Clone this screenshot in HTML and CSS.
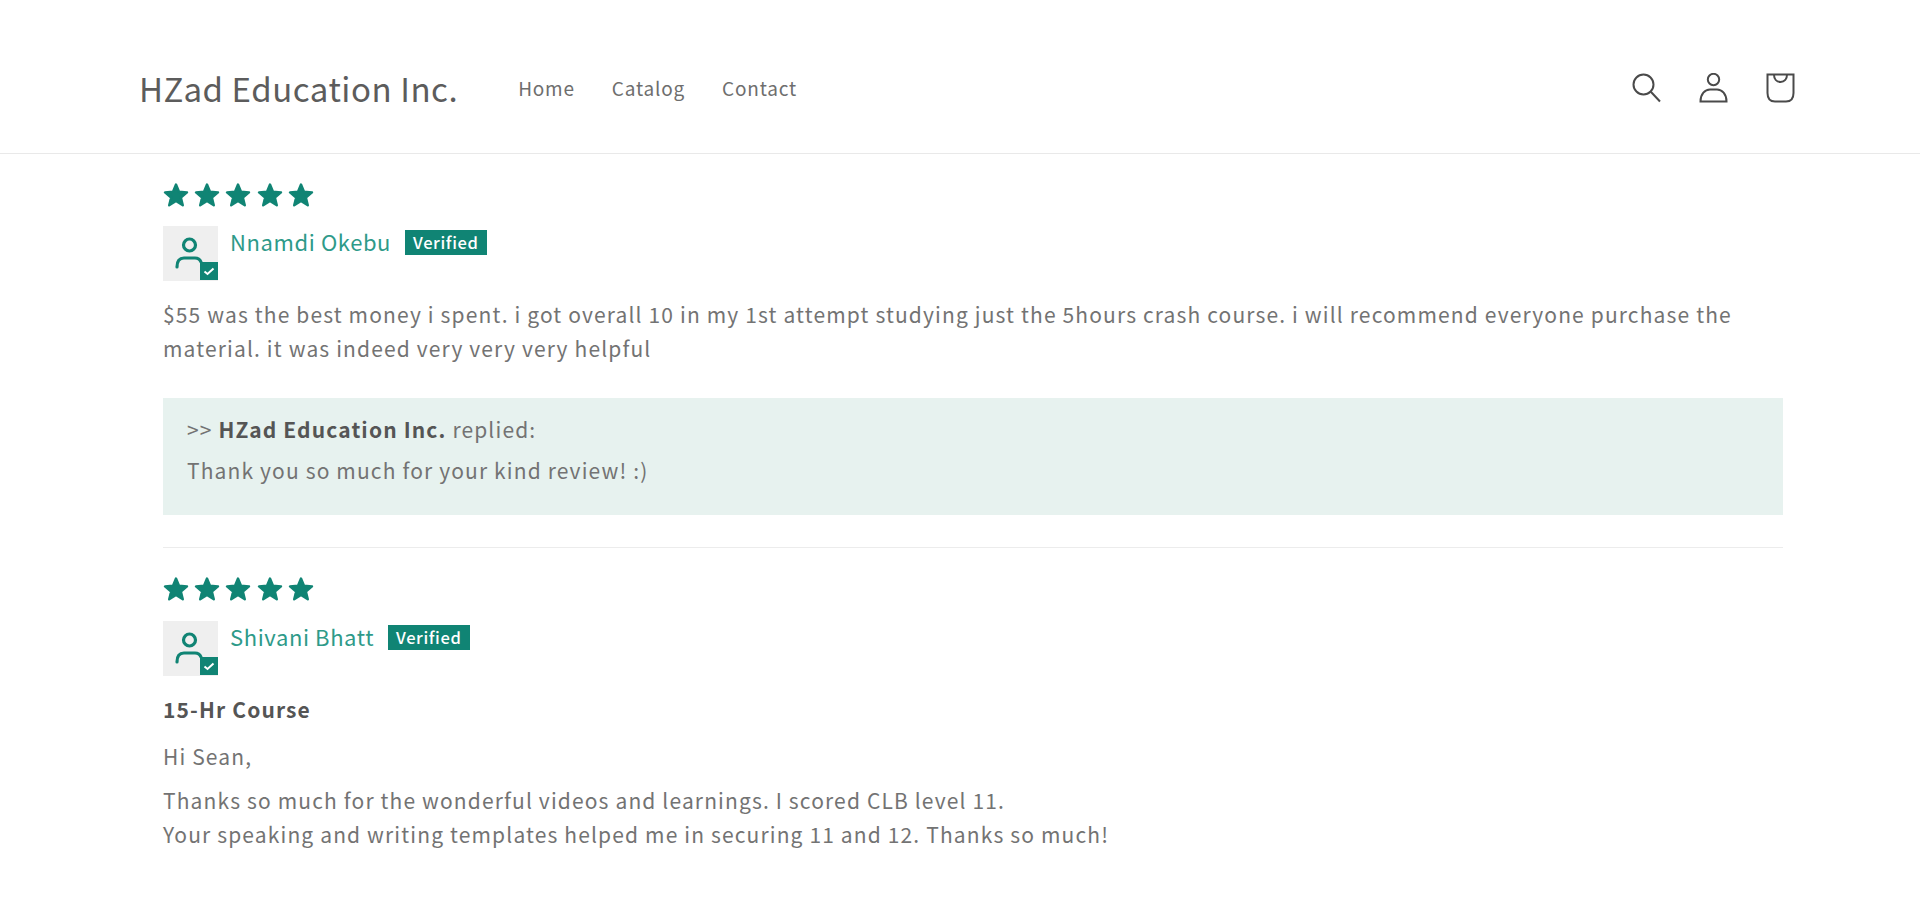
FILE: index.html
```html
<!DOCTYPE html>
<html lang="en">
<head>
    <title>HZad Education Inc.</title>
    <link rel="stylesheet" href="styles.css">
</head>
<body>
    <svg class="defs" width="0" height="0">
        <symbol id="star" viewBox="0 0 26 26"><path d="M13 2.5 L16 9.8 L24 10.4 L17.9 15.5 L19.8 23.3 L13 19.1 L6.2 23.3 L8.1 15.5 L2 10.4 L10 9.8 Z"/></symbol>
        <symbol id="reviewer" viewBox="0 0 55 55"><circle cx="26.5" cy="19" r="6"/><path d="M14 41 C14 35 16 32 21 32 H32 C35 32 37 33.5 38 36"/></symbol>
    </svg>

    <header class="header">
        <a class="logo" href="#">HZad Education Inc.</a>
        <nav class="nav">
            <a href="#">Home</a>
            <a href="#">Catalog</a>
            <a href="#">Contact</a>
        </nav>
        <div class="header-icons">
            <svg class="icon" viewBox="0 0 29 30"><circle cx="11.5" cy="11.5" r="10"/><path d="M18.8 18.8 L28 28.5"/></svg>
            <svg class="icon" viewBox="0 0 29 30"><circle cx="14.5" cy="6.5" r="5.7"/><path d="M1.5 28.5 C1.5 21 6 16.5 11 16.5 H18 C23 16.5 27.5 21 27.5 28.5 Z"/></svg>
            <svg class="icon" viewBox="0 0 29 30"><path d="M1.5 1.5 H27.5 V20 C27.5 25.5 24.5 28.5 20 28.5 H9 C4.5 28.5 1.5 25.5 1.5 20 Z"/><path d="M8 1.5 C8 6 10.5 9 14.5 9 C18.5 9 21 6 21 1.5"/></svg>
        </div>
    </header>

    <main class="reviews">
        <article class="review">
            <div class="stars">
                <svg><use href="#star"/></svg>
                <svg><use href="#star"/></svg>
                <svg><use href="#star"/></svg>
                <svg><use href="#star"/></svg>
                <svg><use href="#star"/></svg>
            </div>
            <div class="reviewer">
                <div class="avatar">
                    <svg class="avatar-person"><use href="#reviewer"/></svg>
                    <span class="avatar-check"><svg viewBox="0 0 18 18"><path d="M4.5 9.5 L7.5 12 L13.5 6.5"/></svg></span>
                </div>
                <span class="name">Nnamdi Okebu</span>
                <span class="badge">Verified</span>
            </div>
            <p class="body">$55 was the best money i spent. i got overall 10 in my 1st attempt studying just the 5hours crash course. i will recommend everyone purchase the material. it was indeed very very very helpful</p>
            <div class="reply">
                <p>&gt;&gt; <b>HZad Education Inc.</b> replied:</p>
                <p>Thank you so much for your kind review! :)</p>
            </div>
        </article>

        <article class="review">
            <div class="stars">
                <svg><use href="#star"/></svg>
                <svg><use href="#star"/></svg>
                <svg><use href="#star"/></svg>
                <svg><use href="#star"/></svg>
                <svg><use href="#star"/></svg>
            </div>
            <div class="reviewer">
                <div class="avatar">
                    <svg class="avatar-person"><use href="#reviewer"/></svg>
                    <span class="avatar-check"><svg viewBox="0 0 18 18"><path d="M4.5 9.5 L7.5 12 L13.5 6.5"/></svg></span>
                </div>
                <span class="name">Shivani Bhatt</span>
                <span class="badge">Verified</span>
            </div>
            <p class="title">15-Hr Course</p>
            <p class="body">Hi Sean,</p>
            <p class="body">Thanks so much for the wonderful videos and learnings. I scored CLB level 11.<br>Your speaking and writing templates helped me in securing 11 and 12. Thanks so much!</p>
        </article>
    </main>
</body>
</html>
```

FILE: styles.css
```css
* {
    box-sizing: border-box;
}
body {
    margin: 0;
    background-color: #fff;
    color: #737373;
    font-family: "Noto Sans CJK SC", "Noto Sans", sans-serif;
    font-size: 21px;
    letter-spacing: 1.14px;
    overflow: hidden;
}
a {
    color: inherit;
    text-decoration: none;
}
.defs {
    position: absolute;
}
.header {
    display: flex;
    align-items: center;
    height: 154px;
    padding: 22px 125px 0 139px;
    border-bottom: 1px solid #e9e9e9;
}
.logo {
    font-size: 33px;
    letter-spacing: 0.55px;
    line-height: 44px;
    color: #5c5c5c;
    margin-right: 60px;
}
.nav {
    display: flex;
    gap: 37px;
    font-size: 19px;
    letter-spacing: 0.8px;
    color: #6e6e6e;
}
.header-icons {
    display: flex;
    gap: 38px;
    margin-left: auto;
}
.icon {
    width: 29px;
    height: 30px;
    fill: none;
    stroke: #4a4a4a;
    stroke-width: 2;
}
.reviews {
    padding: 22.6px 137px 0 163px;
}
.review {
    border-bottom: 1px solid #ececec;
    padding-bottom: 32px;
    margin-bottom: 23px;
}
.review:last-child {
    border-bottom: 0;
}
.stars {
    display: flex;
    gap: 5.4px;
    height: 36px;
    align-items: center;
    margin-left: -0.5px;
}
.stars svg {
    width: 26px;
    height: 26px;
    fill: #108474;
    stroke: #108474;
    stroke-width: 2.4;
    stroke-linejoin: round;
}
.reviewer {
    display: flex;
    align-items: flex-start;
    height: 55px;
    margin-top: 13.5px;
}
.avatar {
    position: relative;
    width: 55px;
    height: 55px;
    margin-right: 12px;
    background-color: #efefef;
}
.avatar-person {
    display: block;
    width: 55px;
    height: 55px;
    fill: none;
    stroke: #108474;
    stroke-width: 3.2;
    stroke-linecap: round;
}
.avatar-check {
    position: absolute;
    right: 0;
    bottom: 1px;
    width: 18px;
    height: 18px;
    background-color: #108474;
}
.avatar-check svg {
    display: block;
    fill: none;
    stroke: #fff;
    stroke-width: 2;
}
.name {
    font-size: 22px;
    letter-spacing: 0.6px;
    line-height: 30px;
    color: #2e9a89;
    margin-right: 14px;
}
.badge {
    margin-top: 4px;
    height: 25px;
    padding: 0 9px 0 8px;
    font-size: 16.5px;
    font-weight: 500;
    letter-spacing: 0.6px;
    line-height: 24px;
    color: #fff;
    background-color: #108474;
}
.title {
    margin: 17px 0 0;
    font-weight: 700;
    line-height: 32px;
    color: #555;
}
.body {
    margin: 11px 0 0;
    line-height: 33.6px;
}
.reviewer + .body {
    margin-top: 17px;
}
.title + .body {
    margin-top: 15px;
}
.reply {
    margin-top: 33px;
    height: 117px;
    padding: 15px 24px;
    background-color: #e7f2ef;
}
.reply p {
    margin: 0 0 8px;
    line-height: 33px;
}
.reply b {
    color: #555;
}
```
